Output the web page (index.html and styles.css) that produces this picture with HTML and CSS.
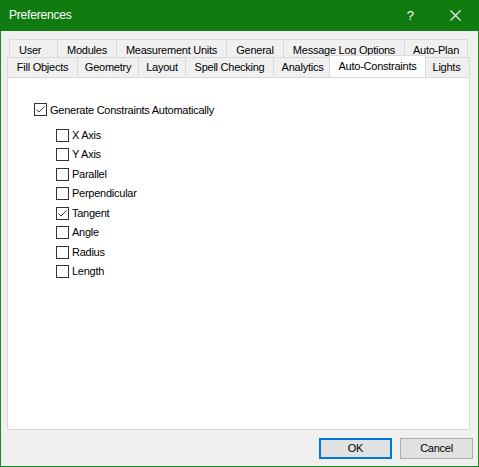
FILE: index.html
```html
<!DOCTYPE html>
<html>
<head>
<meta charset="utf-8">
<link rel="stylesheet" href="styles.css">
</head>
<body>
<div class="window">
  <div class="titlebar">
    <span class="title">Preferences</span>
    <span class="help">?</span>
    <span class="close">
      <svg width="11" height="11" viewBox="0 0 11 11"><path d="M0.5 0.5 L10.5 10.5 M10.5 0.5 L0.5 10.5" stroke="#fff" stroke-width="1.1" fill="none"/></svg>
    </span>
  </div>
  <div class="client">
    <div class="tabs">
      <div class="tabrow row1">
        <div class="tab tab-user">User</div>
        <div class="tab w59">Modules</div>
        <div class="tab w110">Measurement Units</div>
        <div class="tab w57">General</div>
        <div class="tab w121">Message Log Options</div>
        <div class="tab last w64">Auto-Plan</div>
      </div>
      <div class="tabrow row2">
        <div class="tab w70">Fill Objects</div>
        <div class="tab w61">Geometry</div>
        <div class="tab w47">Layout</div>
        <div class="tab w88">Spell Checking</div>
        <div class="tab w58">Analytics</div>
        <div class="tab selected">Auto-Constraints</div>
        <div class="tab last w47">Lights</div>
      </div>
    </div>
    <div class="panel">
      <div class="check main">
        <span class="box"><svg width="11" height="11" viewBox="0 0 11 11"><path d="M1.5 5.5 L4 8 L9.5 2.5" stroke="#444" stroke-width="1" fill="none"/></svg></span>
        <span class="label">Generate Constraints Automatically</span>
      </div>
      <div class="sublist">
        <div class="check"><span class="box"></span><span class="label">X Axis</span></div>
        <div class="check"><span class="box"></span><span class="label">Y Axis</span></div>
        <div class="check"><span class="box"></span><span class="label">Parallel</span></div>
        <div class="check"><span class="box"></span><span class="label">Perpendicular</span></div>
        <div class="check"><span class="box"><svg width="11" height="11" viewBox="0 0 11 11"><path d="M1.5 5.5 L4 8 L9.5 2.5" stroke="#444" stroke-width="1" fill="none"/></svg></span><span class="label">Tangent</span></div>
        <div class="check"><span class="box"></span><span class="label">Angle</span></div>
        <div class="check"><span class="box"></span><span class="label">Radius</span></div>
        <div class="check"><span class="box"></span><span class="label">Length</span></div>
      </div>
    </div>
    <div class="buttons">
      <button class="btn default">OK</button>
      <button class="btn">Cancel</button>
    </div>
  </div>
</div>
</body>
</html>
```
FILE: styles.css
```css
html, body {
  margin: 0;
  padding: 0;
  background: #ffffff;
}

.window {
  width: 479px;
  height: 467px;
  box-sizing: border-box;
  border: 1px solid #1c8a1c;
  border-top: none;
  background: #f0f0f0;
  font-family: "Liberation Sans", Arial, sans-serif;
  font-size: 11px;
  letter-spacing: -0.25px;
  color: #000;
  display: flex;
  flex-direction: column;
}

.titlebar {
  height: 31px;
  margin: 0 -1px;
  background: #107c10;
  color: #fff;
  display: flex;
  align-items: center;
  flex-shrink: 0;
}

.title {
  font-family: "Liberation Sans", Arial, sans-serif;
  font-size: 12px;
  letter-spacing: -0.2px;
  margin-left: 9px;
  flex: 1;
  padding-bottom: 1px;
}

.help {
  font-family: "Liberation Sans", Arial, sans-serif;
  font-size: 13px;
  letter-spacing: 0;
  margin-right: 36px;
  padding-bottom: 1px;
}

.close {
  display: flex;
  margin-right: 18px;
  padding-bottom: 1px;
}

.client {
  flex: 1;
  display: flex;
  flex-direction: column;
}

.tabs {
  padding-top: 8px;
  display: flex;
  flex-direction: column;
}

.tabrow {
  display: flex;
  align-items: flex-start;
}

.row1 {
  margin-left: 8px;
}

.row2 {
  margin-left: 6px;
}

.tab {
  box-sizing: border-box;
  border-top: 1px solid #d9d9d9;
  border-left: 1px solid #d9d9d9;
  background: #f0f0f0;
  text-align: center;
  white-space: nowrap;
  line-height: 13px;
}

.tab.last {
  border-right: 1px solid #d9d9d9;
}

.row1 .tab {
  height: 18px;
  padding-top: 4px;
}

.row2 .tab {
  height: 19px;
  padding-top: 3px;
}

.tab-user {
  width: 48px;
  text-align: left;
  padding-left: 9px;
}

.w47 { width: 47px; }
.w57 { width: 57px; }
.w58 { width: 58px; }
.w59 { width: 59px; }
.w61 { width: 61px; }
.w64 { width: 64px; }
.w70 { width: 70px; }
.w88 { width: 88px; }
.w110 { width: 110px; }
.w121 { width: 121px; }

.row2 .tab.selected {
  position: relative;
  z-index: 2;
  width: 97px;
  height: 22px;
  margin: -2px -3px 0 -2px;
  background: #ffffff;
  border-right: 1px solid #d9d9d9;
  padding-top: 4px;
}

.panel {
  box-sizing: border-box;
  width: 463px;
  height: 353px;
  margin-left: 6px;
  background: #ffffff;
  border: 1px solid #d9d9d9;
  padding: 25px 0 0 26px;
  display: flex;
  flex-direction: column;
}

.check {
  display: flex;
  align-items: flex-start;
  height: 19px;
}

.check.main {
  height: 26px;
}

.sublist {
  margin-left: 22px;
  display: flex;
  flex-direction: column;
}

.sublist .check:nth-child(even) {
  height: 20px;
}

.box {
  box-sizing: border-box;
  width: 13px;
  height: 13px;
  border: 1px solid #333333;
  background: #ffffff;
  display: flex;
  flex-shrink: 0;
}

.label {
  margin-left: 3px;
  line-height: 13px;
  white-space: nowrap;
}

.check.main .label {
  padding-top: 1px;
}

.buttons {
  display: flex;
  justify-content: flex-end;
  gap: 8px;
  margin-top: 8px;
  margin-right: 5px;
}

.btn {
  box-sizing: border-box;
  width: 73px;
  height: 21px;
  margin: 0;
  padding: 0 0 1px 0;
  background: #e1e1e1;
  border: 1px solid #adadad;
  font-family: "Liberation Sans", Arial, sans-serif;
  font-size: 11px;
  letter-spacing: -0.25px;
  color: #000;
}

.btn.default {
  border: 2px solid #0078d7;
}
```
